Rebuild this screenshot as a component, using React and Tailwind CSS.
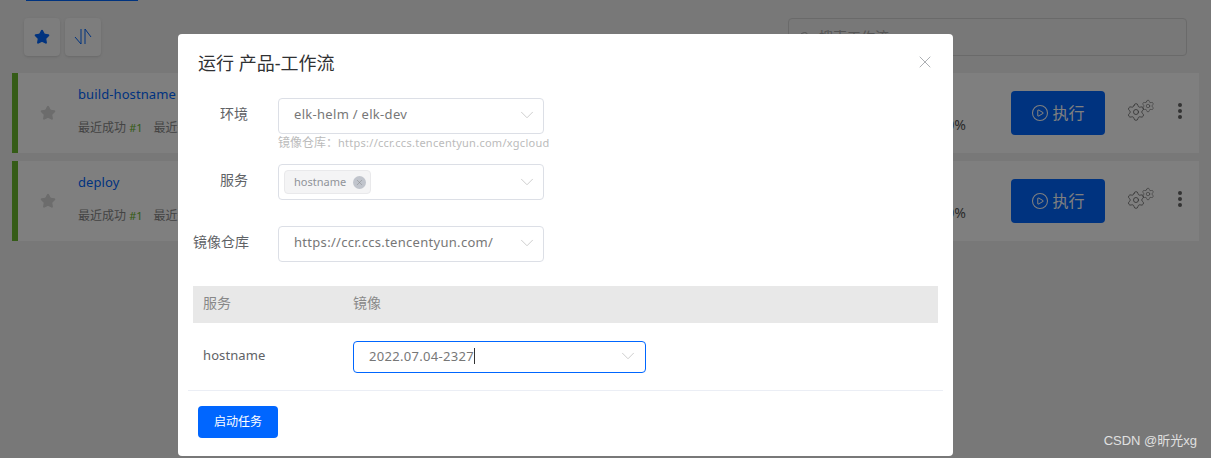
import { ChevronDown, Settings, X, Search, Star, CirclePlay } from "lucide-react";

const FONT = "font-['Noto_Sans','Noto_Sans_CJK_SC',sans-serif]";

function Arrow() {
  return <ChevronDown size={22} strokeWidth={0.9} className="text-[#c4c4c4] shrink-0" />;
}

function WorkflowCard({ name }) {
  return (
    <div className="flex h-20 pr-[17px] bg-white border-l-[6px] border-[#6ab82e]">
      <div className="w-[60px] flex items-center justify-center">
        <Star size={16} className="text-[#d8d8d8] fill-[#d8d8d8]" />
      </div>
      <div className="pt-[11px]">
        <div className="text-[13px] leading-5 tracking-[0.1px] text-[#0066ff]">{name}</div>
        <div className="mt-[14px] text-xs leading-5 text-[#888]">
          最近成功 <span className="text-[11px] text-[#6ab82e]">#1</span>
          <span className="ml-[11px]">最近失败</span>
        </div>
      </div>
      <div className="flex-1 flex justify-end items-end pb-[18px] pr-[45px] text-sm text-[#555]">0%</div>
      <button className="mt-[18px] w-[94px] h-11 rounded bg-[#0066ff] text-white text-base flex items-center justify-center gap-[3px]">
        <CirclePlay size={18} strokeWidth={1.4} />
        执行
      </button>
      <div className="ml-[21px] mt-[26px] relative w-7 h-6">
        <Settings size={20} strokeWidth={1} className="absolute left-0 top-[3px] text-[#666]" />
        <Settings size={14} strokeWidth={1} className="absolute left-[15px] top-0 text-[#666]" />
      </div>
      <div className="ml-[24px] mt-[30px] flex flex-col gap-[2px]">
        <span className="w-1 h-1 rounded-full bg-[#666] block" />
        <span className="w-1 h-1 rounded-full bg-[#666] block" />
        <span className="w-1 h-1 rounded-full bg-[#666] block" />
      </div>
    </div>
  );
}

function Field({ label, children, className }) {
  return (
    <div className={`flex items-center ${className}`}>
      <label className="w-[55px] mr-[30px] pb-1 text-right text-sm text-[#606266] whitespace-nowrap">{label}</label>
      {children}
    </div>
  );
}

function Select({ children }) {
  return (
    <div className="w-[266px] h-9 border border-[#dcdfe6] rounded pl-[15px] pr-[5px] pb-[2px] flex items-center justify-between text-[13px] tracking-[0.3px] text-[#777]">
      {children}
      <Arrow />
    </div>
  );
}

export default function App() {
  return (
    <div className={`relative w-[1211px] h-[458px] overflow-hidden bg-[#f0f0f0] ${FONT}`}>
      <div className="px-3">
        <div className="ml-[14px] w-[112px] h-px bg-[#0066ff]" />
        <div className="mt-[17px] h-[38px] flex justify-between pl-3 pr-3">
          <div className="flex gap-[5px]">
            <button className="w-9 h-[38px] rounded bg-[#fafafa] shadow-sm flex items-center justify-center">
              <Star size={16} className="text-[#0066ff] fill-[#0066ff]" />
            </button>
            <button className="w-9 h-[38px] rounded bg-[#fafafa] shadow-sm flex items-center justify-center">
              <svg width="18" height="18" viewBox="0 0 18 18" fill="none" stroke="#0066ff" strokeWidth="1">
                <path d="M1 9 L7 16 V1" />
                <path d="M11 16 V1 L17 9" />
              </svg>
            </button>
          </div>
          <div className="w-[399px] h-[38px] border border-[#d4d4d4] rounded flex items-center gap-2 pl-[10px] text-sm text-[#aaa]">
            <Search size={12} />
            搜索工作流
          </div>
        </div>
        <div className="mt-[17px] flex flex-col gap-2">
          <WorkflowCard name="build-hostname" />
          <WorkflowCard name="deploy" />
        </div>
      </div>

      <div className="absolute inset-0 bg-black/50" />

      <div className="absolute left-[178px] top-[34px] w-[775px] h-[422px] bg-white rounded-sm">
        <div className="flex items-center justify-between pl-5 pr-[18px] pt-[8px] h-[50px]">
          <h2 className="text-lg text-[#303133]">运行 产品-工作流</h2>
          <X size={20} strokeWidth={0.9} className="text-[#909399] -mt-0.5" />
        </div>
        <div className="pl-[15px] pt-[14px]">
          <Field label="环境">
            <Select>elk-helm / elk-dev</Select>
          </Field>
          <div className="ml-[85px] h-[18px] leading-[18px] text-xs text-[#bbb] whitespace-nowrap">
            镜像仓库：<span className="text-[11px] tracking-[0.26px]">https://ccr.ccs.tencentyun.com/xgcloud</span>
          </div>
          <Field label="服务" className="mt-[12px]">
            <div className="w-[266px] h-9 border border-[#dcdfe6] rounded pl-[5px] pr-[5px] flex items-center justify-between">
              <span className="h-6 px-[9px] pr-[4px] bg-[#f4f4f5] border border-[#e9e9eb] rounded flex items-center gap-[7px] text-[11px] text-[#909399]">
                hostname
                <span className="w-[13px] h-[13px] rounded-full bg-[#c0c4cc] flex items-center justify-center">
                  <X size={9} strokeWidth={1} className="text-[#777]" />
                </span>
              </span>
              <Arrow />
            </div>
          </Field>
          <Field label="镜像仓库" className="mt-[26px]">
            <Select>https://ccr.ccs.tencentyun.com/</Select>
          </Field>
          <div className="mt-6 mr-[15px] h-[37px] pb-1 bg-[#e8e8e8] flex items-center text-sm text-[#888]">
            <span className="w-[160px] pl-[10px]">服务</span>
            <span>镜像</span>
          </div>
          <div className="mr-[15px] mt-[18px] flex items-center text-[13px] text-[#606266]">
            <span className="w-[160px] pl-[10px] pb-[2px] tracking-[0.1px]">hostname</span>
            <div className="w-[293px] h-8 border border-[#0066ff] rounded pl-[15px] pr-[6px] pb-[2px] flex items-center justify-between tracking-[0.3px] text-[#777]">
              <span className="border-r border-[#333] leading-4">2022.07.04-2327</span>
              <Arrow />
            </div>
          </div>
        </div>
        <div className="mx-[10px] mt-[17px] border-t border-[#ebeef5] pt-[15px] px-[10px]">
          <button className="w-20 h-8 rounded-sm bg-[#0066ff] text-white text-xs">启动任务</button>
        </div>
      </div>

      <div className="absolute right-[14px] bottom-[9px] text-[13px] leading-4 text-[#e0e0e0] font-['Liberation_Sans','Noto_Sans_CJK_SC',sans-serif]">CSDN @昕光xg</div>
    </div>
  );
}
